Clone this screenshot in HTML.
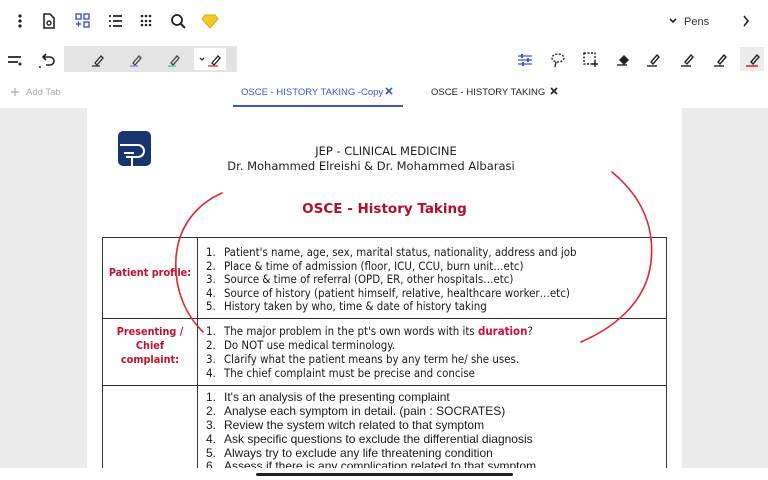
<html><head><style>
body{margin:0;width:768px;height:480px;overflow:hidden;background:#fff;font-family:"Liberation Sans",sans-serif;position:relative}
.a{position:absolute}
.pg{font-family:"DejaVu Sans","Liberation Sans",sans-serif;color:#222}
.li{position:absolute;font-size:11.4px;white-space:nowrap;color:#1a1a1a;font-family:"DejaVu Sans Condensed","DejaVu Sans",sans-serif}
.n{display:inline-block;width:18px}
.lb{position:absolute;color:#c0112e;font-weight:bold;font-size:10.8px;text-align:center;font-family:"DejaVu Sans Condensed","DejaVu Sans",sans-serif}
.nr{position:absolute;font-size:12px;white-space:nowrap;color:#1a1a1a;font-family:"Liberation Sans",sans-serif}
</style></head><body>
<svg class="a" style="left:0;top:0" width="768" height="108">
<g fill="#222"><circle cx="20" cy="16" r="1.6"/><circle cx="20" cy="21" r="1.6"/><circle cx="20" cy="26" r="1.6"/></g>
<path d="M44 14h6l4 4v10h-10z" fill="none" stroke="#222" stroke-width="1.6"/><circle cx="49" cy="23" r="2" fill="none" stroke="#222" stroke-width="1.4"/>
<g fill="none" stroke="#3a56d4" stroke-width="1.4"><rect x="76" y="14" width="5" height="5"/><rect x="84" y="14" width="5" height="5"/><rect x="84" y="22" width="5" height="5"/><path d="M76 24h5M78.5 21.5v5"/></g>
<g stroke="#222" stroke-width="1.8"><path d="M109 16h2M113 16h9M109 21h2M113 21h9M109 26h2M113 26h9"/></g>
<g fill="#222"><circle cx="142" cy="16" r="1.3"/><circle cx="146" cy="16" r="1.3"/><circle cx="150" cy="16" r="1.3"/><circle cx="142" cy="21" r="1.3"/><circle cx="146" cy="21" r="1.3"/><circle cx="150" cy="21" r="1.3"/><circle cx="142" cy="25" r="1.3"/><circle cx="146" cy="25" r="1.3"/><circle cx="150" cy="25" r="1.3"/></g>
<circle cx="177" cy="20" r="5" fill="none" stroke="#222" stroke-width="1.8"/><path d="M181 24l4 4" stroke="#222" stroke-width="2"/>
<path d="M205 15h10l3 4-8 9-8-9z" fill="#f5c82c" stroke="#e0a800" stroke-width="1"/>
<path d="M670 19l3 3 3-3" fill="none" stroke="#222" stroke-width="1.6"/>
<text x="684" y="25" font-size="11" fill="#333" font-family="Liberation Sans">Pens</text>
<path d="M744 16l4 5-4 5" fill="none" stroke="#222" stroke-width="1.6"/>
<path d="M8 57h13M8 62h10" stroke="#222" stroke-width="1.8"/><circle cx="20" cy="64" r="1.5" fill="#222"/>
<path d="M44 57h6a4 4 0 0 1 0 8h-4M46 54l-3 3 3 3" fill="none" stroke="#222" stroke-width="1.6"/><circle cx="40" cy="67" r="1" fill="#222"/>
<rect x="64" y="46" width="173" height="26" fill="#e4e4e4"/>
<rect x="194" y="48" width="32" height="22" fill="#fff"/>
<g fill="none" stroke-width="1.3"><path d="M95 63l6-7 2 2-6 7z" stroke="#333"/><path d="M92 66h8" stroke="#333"/>
<path d="M133 63l6-7 2 2-6 7z" stroke="#444"/><path d="M130 66h8" stroke="#7b86d9"/>
<path d="M171 63l6-7 2 2-6 7z" stroke="#444"/><path d="M168 66h8" stroke="#4bc6a0"/>
<path d="M200 58l2 2 2-2" stroke="#333"/><path d="M212 63l6-7 2 2-6 7z" stroke="#222"/><path d="M208 66h10" stroke="#e23"/></g>
<path d="M518 56h14M518 60h14M518 64h14" stroke="#3a56d4" stroke-width="1.3"/><g fill="#3a56d4"><rect x="521" y="54" width="2" height="4"/><rect x="527" y="58" width="2" height="4"/><rect x="522" y="62" width="2" height="4"/></g>
<ellipse cx="558" cy="58" rx="6" ry="4" fill="none" stroke="#222" stroke-width="1.4" stroke-dasharray="2 1.5"/><path d="M556 62l-1 5" stroke="#222" stroke-width="1.4"/>
<rect x="584" y="53" width="11" height="11" fill="none" stroke="#222" stroke-width="1.4" stroke-dasharray="2 1.5"/><path d="M595 61v6M592 64h6" stroke="#222" stroke-width="1.4"/>
<path d="M619 60l5-5 5 5-5 5z" fill="#222"/><path d="M617 65h10" stroke="#222" stroke-width="1.4"/>
<g fill="none" stroke="#222" stroke-width="1.4"><path d="M651 62l6-7 2 2-6 7z"/><path d="M647 66h10"/><path d="M685 62l6-7 2 2-6 7z"/><path d="M681 66h10"/><path d="M718 62l6-7 2 2-6 7z"/><path d="M714 66h10"/></g>
<rect x="740" y="47" width="24" height="24" fill="#ececec"/><path d="M751 62l6-7 2 2-6 7z" fill="none" stroke="#222" stroke-width="1.4"/><path d="M746 66h12" stroke="#e23" stroke-width="1.6"/>
<path d="M11 92h8M15 88v8" stroke="#aaa" stroke-width="1.2"/>
<text x="26" y="95" font-size="9.5" fill="#aaa">Add Tab</text>
<text x="241" y="95" font-size="9.5" fill="#3a56d4">OSCE - HISTORY TAKING -Copy</text>
<path d="M386 88l6 6M392 88l-6 6" stroke="#3a56d4" stroke-width="1.6"/>
<rect x="233" y="105" width="170" height="2" fill="#3a56d4"/>
<text x="431" y="95" font-size="9.5" fill="#222">OSCE - HISTORY TAKING</text>
<path d="M551 88l6 6M557 88l-6 6" stroke="#222" stroke-width="1.6"/>
</svg>
<div class="a" style="left:0;top:108px;width:768px;height:360px;background:#ebebeb"></div>
<div class="a" style="left:87px;top:108px;width:595px;height:360px;background:#fff"></div>
<svg class="a" style="left:118px;top:131px" width="36" height="38"><rect width="33" height="35" rx="5" fill="#17356e"/><path d="M2 14h18a6 6 0 0 1 0 12h-12M6 22h10M14 26v10" fill="none" stroke="#fff" stroke-width="2"/></svg>
<div class="a pg" style="left:0;width:768px;top:144px;text-align:center;font-size:11.5px;padding-left:4px;box-sizing:border-box">JEP - CLINICAL MEDICINE</div>
<div class="a pg" style="left:0;width:768px;top:159px;text-align:center;font-size:11.5px;padding-right:26px;box-sizing:border-box">Dr. Mohammed Elreishi &amp; Dr. Mohammed Albarasi</div>
<div class="a pg" style="left:0;width:768px;top:201px;text-align:center;font-size:13.5px;font-weight:bold;color:#b0102a;padding-left:1px;box-sizing:border-box">OSCE - History Taking</div>
<div class="a" style="left:102px;top:237px;width:563px;height:240px;border:1.3px solid #333;border-bottom:none"></div>
<div class="a" style="left:197px;top:237px;width:1.3px;height:240px;background:#333"></div>
<div class="a" style="left:102px;top:318px;width:565px;height:1.3px;background:#333"></div>
<div class="a" style="left:102px;top:385px;width:565px;height:1.3px;background:#333"></div>
<div class="lb" style="left:103px;width:94px;top:266px">Patient profile:</div>
<div class="lb" style="left:103px;width:94px;top:325px;line-height:14px">Presenting /<br>Chief<br>complaint:</div>
<div class="li" style="left:206px;top:245px"><span class="n">1.</span>Patient's name, age, sex, marital status, nationality, address and job</div>
<div class="li" style="left:206px;top:259px"><span class="n">2.</span>Place &amp; time of admission (floor, ICU, CCU, burn unit…etc)</div>
<div class="li" style="left:206px;top:272px"><span class="n">3.</span>Source &amp; time of referral (OPD, ER, other hospitals…etc)</div>
<div class="li" style="left:206px;top:286px"><span class="n">4.</span>Source of history (patient himself, relative, healthcare worker…etc)</div>
<div class="li" style="left:206px;top:299px"><span class="n">5.</span>History taken by who, time &amp; date of history taking</div>
<div class="li" style="left:206px;top:324px"><span class="n">1.</span>The major problem in the pt's own words with its <b style="color:#d0103a">duration</b>?</div>
<div class="li" style="left:206px;top:338px"><span class="n">2.</span>Do NOT use medical terminology.</div>
<div class="li" style="left:206px;top:352px"><span class="n">3.</span>Clarify what the patient means by any term he/ she uses.</div>
<div class="li" style="left:206px;top:366px"><span class="n">4.</span>The chief complaint must be precise and concise</div>
<div class="nr" style="left:206px;top:390px"><span class="n">1.</span>It's an analysis of the presenting complaint</div>
<div class="nr" style="left:206px;top:404px"><span class="n">2.</span>Analyse each symptom in detail. (pain : SOCRATES)</div>
<div class="nr" style="left:206px;top:418px"><span class="n">3.</span>Review the system witch related to that symptom</div>
<div class="nr" style="left:206px;top:432px"><span class="n">4.</span>Ask specific questions to exclude the differential diagnosis</div>
<div class="nr" style="left:206px;top:446px"><span class="n">5.</span>Always try to exclude any life threatening condition</div>
<div class="nr" style="left:206px;top:459px;height:9px;overflow:hidden;line-height:14px"><span class="n">6.</span>Assess if there is any complication related to that symptom</div>
<div class="a" style="left:0;top:468px;width:768px;height:12px;background:#fff"></div>
<div class="a" style="left:256px;top:473px;width:257px;height:3px;background:#222;border-radius:2px"></div>
<svg class="a" style="left:0;top:0" width="768" height="480"><g fill="none" stroke="#e0262e" stroke-width="1.6" stroke-linecap="round">
<path d="M222 193C195 205 178 228 176 258C174 290 186 315 203 332"/>
<path d="M612 172C640 195 655 225 651 262C647 298 620 325 581 342"/></g></svg>
</body></html>
